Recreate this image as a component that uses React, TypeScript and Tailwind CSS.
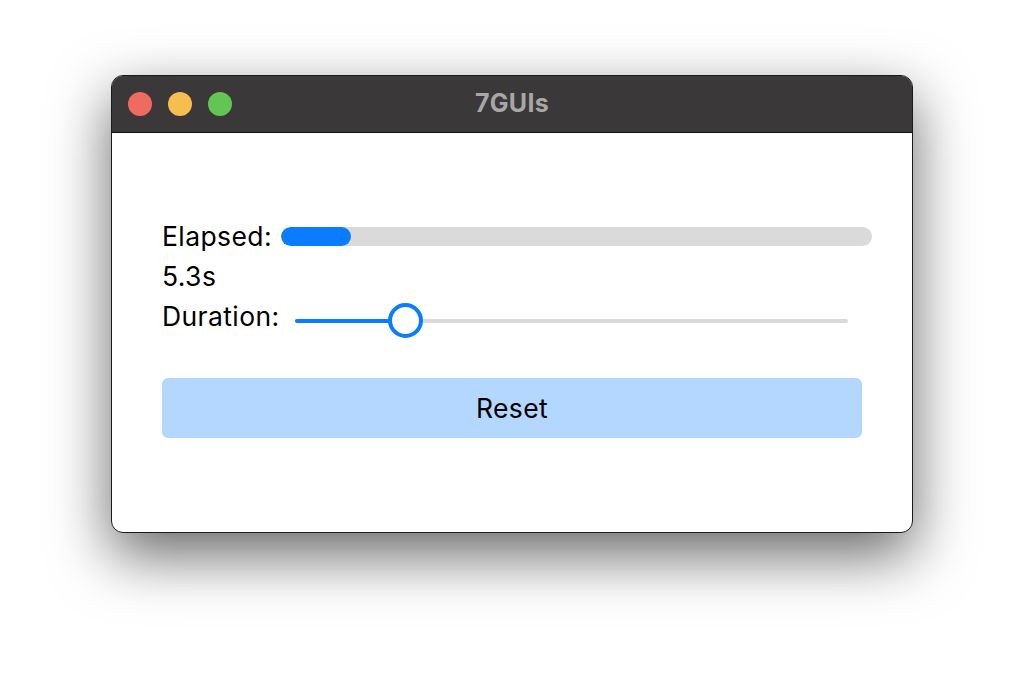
import React from "react";

export default function App() {
  const font = { fontFamily: "Inter, 'Noto Sans', sans-serif" };
  return (
    <div className="w-[1024px] h-[680px] bg-white pt-[75px] pl-[111px]" style={font}>
      <div className="w-[802px] h-[458px] rounded-[12px] border border-[#1a1a1a] bg-white overflow-hidden shadow-[0_22px_60px_rgba(0,0,0,0.6)] flex flex-col">
        <div className="relative h-[57px] bg-[#3a3839] border-b border-[#111] flex items-center pl-[16px] gap-[16px] shrink-0">
          <div className="w-[24px] h-[24px] rounded-full bg-[#ee6b60]" />
          <div className="w-[24px] h-[24px] rounded-full bg-[#f5be4f]" />
          <div className="w-[24px] h-[24px] rounded-full bg-[#62c554]" />
          <div className="absolute inset-0 flex items-center justify-center text-[25px] font-bold text-[#a8a7a8] tracking-[0.3px]">
            7GUIs
          </div>
        </div>
        <div className="flex-1 pl-[50px] pt-[83px] text-[26.5px] leading-none text-black tracking-[0.4px]">
          <div className="w-[710px] h-[40px] flex items-center">
            <span className="w-[119px] shrink-0">Elapsed:</span>
            <div className="flex-1 h-[19px] rounded-full bg-[#dadada] overflow-hidden">
              <div className="h-full w-[70px] rounded-full bg-[#0a7cff]" />
            </div>
          </div>
          <div className="h-[40px] flex items-center">5.3s</div>
          <div className="h-[40px] flex items-center">
            <span className="w-[133px] shrink-0">Duration:</span>
            <div className="relative mt-[9px] w-[553px] h-[36px] flex items-center">
              <div className="w-full h-[4px] rounded-full bg-[#dadada] flex">
                <div className="h-full w-[111px] rounded-full bg-[#0a7cff]" />
              </div>
              <div className="absolute left-[93px] top-[0px] w-[35px] h-[35px] rounded-full border-[4px] border-[#0a7cff] bg-white" />
            </div>
          </div>
          <button className="mt-[42px] w-[700px] h-[60px] rounded-[6px] bg-[#b3d7ff] text-[26.5px] text-black tracking-[0.4px] flex items-center justify-center">
            Reset
          </button>
        </div>
      </div>
    </div>
  );
}
